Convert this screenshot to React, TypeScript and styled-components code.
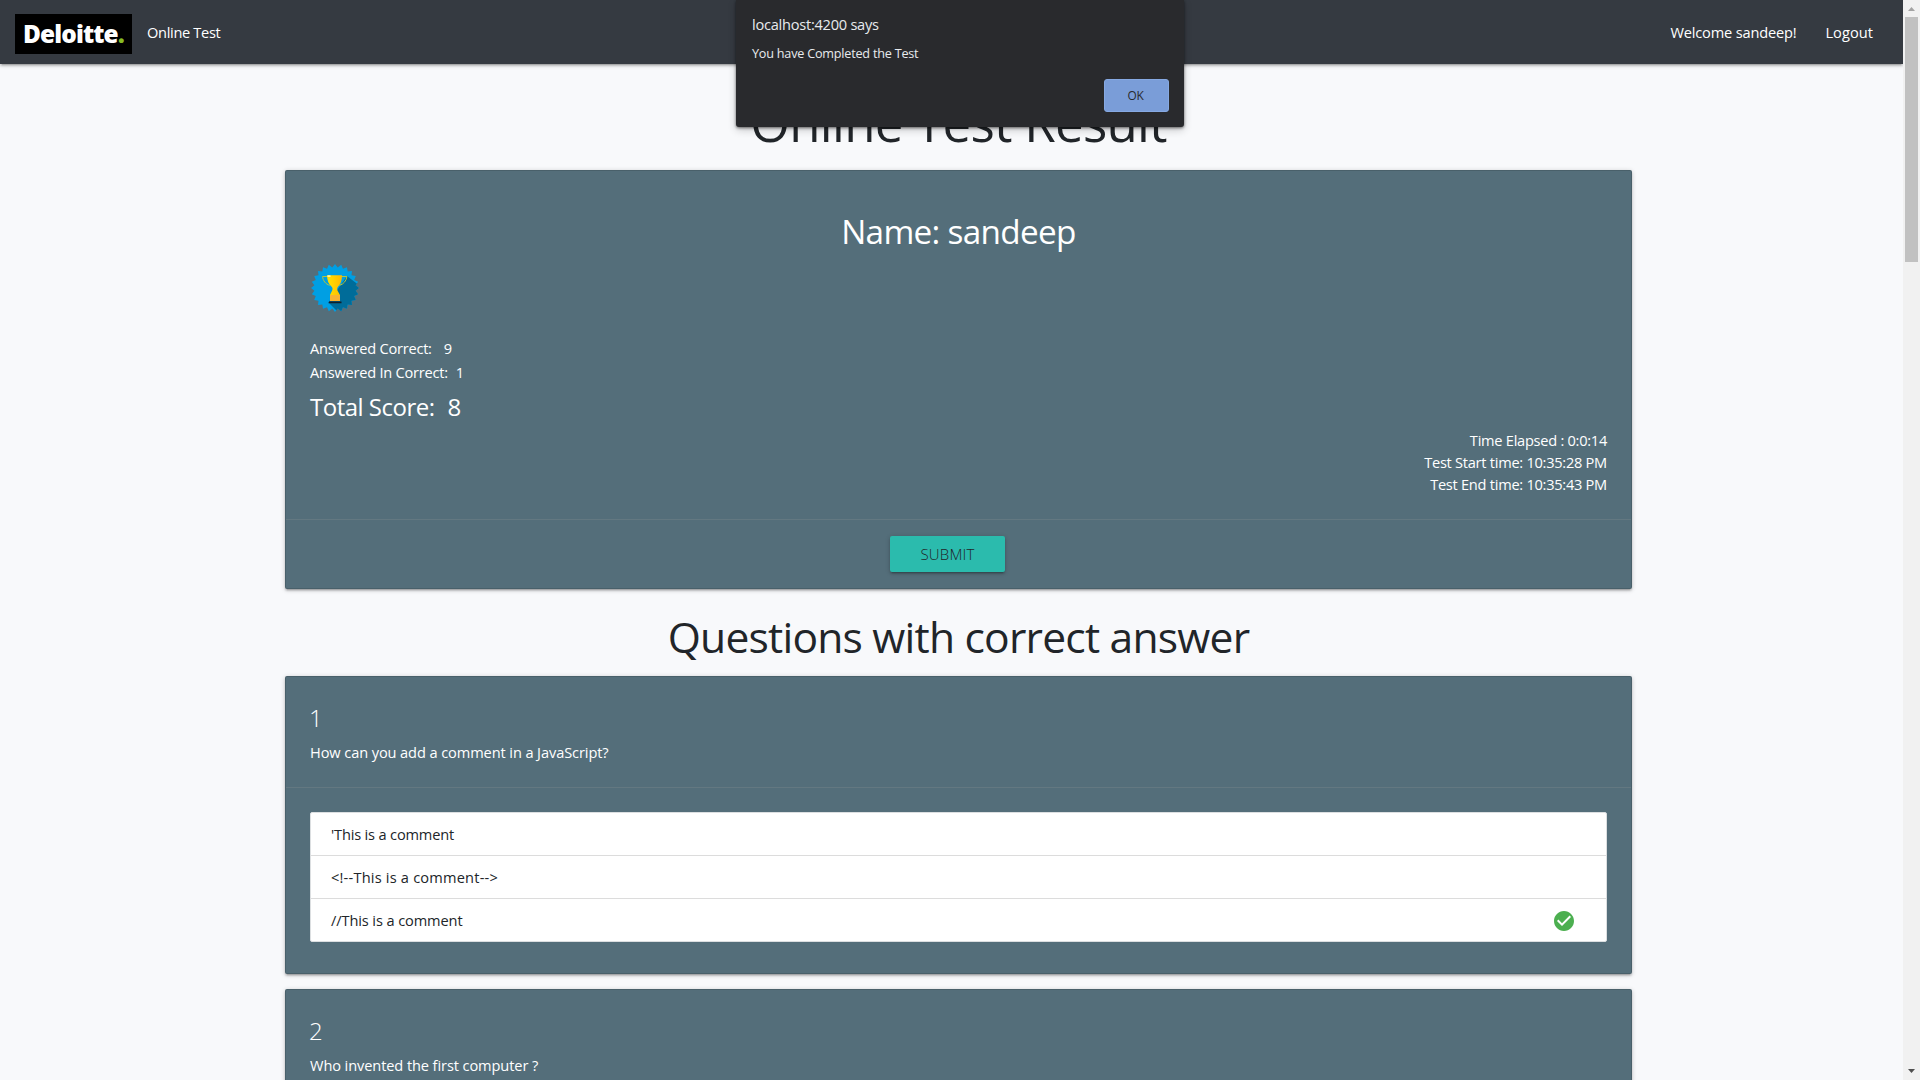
import React from "react";
import styled, { createGlobalStyle } from "styled-components";

const GlobalStyle = createGlobalStyle`
  * { box-sizing: border-box; }
  body {
    margin: 0;
    background: #f8f9fb;
    color: #212529;
    font-family: "Open Sans", "Noto Sans", sans-serif;
    font-size: 14.6px;
    overflow: hidden;
  }
  h1, h2, h3, h4, p, ul { margin: 0; padding: 0; font-weight: 400; }
`;

const depth =
  "0 2px 2px 0 rgba(0,0,0,.14), 0 3px 1px -2px rgba(0,0,0,.12), 0 1px 5px 0 rgba(0,0,0,.2)";

const Window = styled.div`
  position: relative;
  display: flex;
  width: 1920px;
  height: 1080px;
  overflow: hidden;
`;

const Page = styled.div`
  flex: 1;
  height: 100%;
  overflow: hidden;
`;

const Navbar = styled.nav`
  display: flex;
  align-items: center;
  height: 64px;
  padding: 0 30px 0 15px;
  background: #353a41;
  color: #fff;
  box-shadow: ${depth};
`;

const Logo = styled.div`
  align-self: flex-end;
  width: 117px;
  height: 40px;
  margin: 0 15px 10px 0;
  padding-left: 8px;
  background: #000;
  font-size: 24.4px;
  line-height: 39px;
  font-weight: 800;
  letter-spacing: -0.88px;
  span { color: #86bc25; }
`;

const NavText = styled.span<{ $spacing: number; $push?: boolean }>`
  line-height: 64px;
  letter-spacing: ${(p) => p.$spacing}px;
  margin-left: ${(p) => (p.$push ? "auto" : "0")};
`;

const Logout = styled(NavText)`
  margin-left: 29px;
`;

const Content = styled.main`
  padding: 29px 271px 0 285px;
`;

const PageTitle = styled.h1`
  font-size: 51px;
  line-height: 58px;
  letter-spacing: -0.7px;
  text-align: center;
  margin-bottom: 19px;
`;

const SectionTitle = styled.h2`
  font-size: 42.6px;
  line-height: 48px;
  letter-spacing: -0.79px;
  text-align: center;
  margin: 23px 0 16px;
`;

const Card = styled.section`
  border: 1px solid rgba(0, 0, 0, 0.125);
  border-radius: 2px;
  background: #546e7a;
  color: #fff;
  box-shadow: ${depth};
  margin-bottom: 15px;
`;

const ResultBody = styled.div`
  display: flex;
  flex-direction: column;
  padding: 41px 24px 24px;
`;

const Name = styled.h3`
  font-size: 33.3px;
  line-height: 38px;
  letter-spacing: -0.68px;
  text-align: center;
`;

const Badge = styled.svg`
  width: 50px;
  height: 50px;
  margin: 13px 0 23px;
`;

const Stat = styled.p`
  display: flex;
  line-height: 24px;
  letter-spacing: -0.23px;
`;

const StatValue = styled.span<{ $gap: number }>`
  margin-left: ${(p) => p.$gap}px;
`;

const Total = styled(Stat)`
  margin: 8px 0 7px;
  font-size: 24px;
  line-height: 30px;
  letter-spacing: -0.5px;
`;

const Times = styled.div`
  text-align: right;
  line-height: 22px;
  letter-spacing: -0.26px;
`;

const CardAction = styled.div`
  display: flex;
  justify-content: center;
  padding: 16px 22px 16px 0;
  border-top: 1px solid rgba(160, 160, 160, 0.2);
`;

const SubmitButton = styled.button`
  width: 115px;
  height: 36px;
  padding: 1px 0 0;
  border: 0;
  border-radius: 2px;
  background: #2bbbad;
  color: #212529;
  font-family: inherit;
  font-size: 15px;
  font-weight: 350;
  line-height: 35px;
  letter-spacing: 0.2px;
  box-shadow: ${depth};
`;

const QuestionHead = styled.div`
  padding: 26px 24px 24px;
`;

const QuestionNumber = styled.h4`
  margin: 0 0 8px -1px;
  font-size: 24px;
  line-height: 30px;
  font-weight: 300;
`;

const QuestionText = styled.p`
  line-height: 22px;
  letter-spacing: -0.1px;
`;

const Answers = styled.div`
  padding: 24px 24px 31px;
  border-top: 1px solid rgba(160, 160, 160, 0.2);
`;

const AnswerList = styled.ul`
  list-style: none;
  border: 1px solid #dcdfe1;
  border-radius: 2px;
  background: #fff;
  color: #212529;
`;

const Answer = styled.li<{ $spacing: number }>`
  display: flex;
  align-items: center;
  justify-content: space-between;
  height: 42px;
  padding: 0 31px 0 20px;
  letter-spacing: ${(p) => p.$spacing}px;
  & + & { height: 43px; border-top: 1px solid #dcdcdc; }
`;

const CheckIcon = styled.svg`
  width: 24px;
  height: 24px;
  margin: 1px -0.5px 0 0;
`;

const Scrollbar = styled.aside`
  display: flex;
  flex-direction: column;
  align-items: center;
  justify-content: space-between;
  width: 17px;
  height: 100%;
  background: #f1f1f1;
`;

const Arrow = styled.svg`
  display: block;
  width: 17px;
  height: 17px;
`;

const Track = styled.div`
  flex: 1;
  width: 13px;
`;

const Thumb = styled.div`
  height: 245px;
  background: #c1c1c1;
`;

const Dialog = styled.div`
  position: absolute;
  top: 0;
  left: 736px;
  display: flex;
  flex-direction: column;
  width: 448px;
  height: 127px;
  padding: 13px 16px 15px;
  border-radius: 0 0 3px 3px;
  background: #292a2d;
  color: #e8eaed;
  box-shadow: 0 1px 3px rgba(0, 0, 0, 0.55), 0 3px 8px rgba(0, 0, 0, 0.2);
`;

const DialogTitle = styled.p`
  line-height: 22px;
  letter-spacing: -0.25px;
`;

const DialogMessage = styled.p`
  margin-top: 8px;
  font-size: 12.65px;
  line-height: 20px;
  letter-spacing: -0.22px;
`;

const OkButton = styled.button`
  align-self: flex-end;
  width: 65px;
  height: 33px;
  margin: auto -1px 0 0;
  padding: 0 2px 1px 0;
  border: 1px solid #86a9e2;
  border-radius: 3px;
  background: #7a9dd8;
  color: #292a2d;
  font-family: inherit;
  font-size: 11.9px;
  line-height: 28px;
  letter-spacing: -0.3px;
`;

const teeth = 24;
const burst = Array.from({ length: teeth * 2 }, (_, i) => {
  const radius = i % 2 ? 20.8 : 24;
  const angle = (Math.PI * i) / teeth;
  return `${(25 + radius * Math.sin(angle)).toFixed(2)},${(25 - radius * Math.cos(angle)).toFixed(2)}`;
}).join(" ");

const Trophy = () => (
  <Badge viewBox="0 0 50 50">
    <defs>
      <clipPath id="burst"><polygon points={burst} /></clipPath>
      <linearGradient id="gold">
        <stop offset="0" stopColor="#ffe100" />
        <stop offset="0.45" stopColor="#ffd000" />
        <stop offset="1" stopColor="#fdb900" />
      </linearGradient>
    </defs>
    <polygon points={burst} fill="#009fe3" />
    <path d="M37 13 50 23V50H29L18.500 39.500Z" fill="#006c99" clipPath="url(#burst)" />
    <path d="M17.500 13.500H12.600c.3 4 3 7.800 7.200 8.800M31.500 13.500H36.900c-.5 4-3.200 7.800-7.400 8.800" fill="none" stroke="#b5c43c" strokeWidth="1" />
    <path d="M17 12.300H32c0 5.500-1.500 9-4.200 11.700-1 1-.8 3 .2 4.600l2 3.400H20l1.700-3.400c1-1.800 1.200-3.600.2-4.600C18.700 21.300 17.200 17.800 17 12.300Z" fill="url(#gold)" />
    <path d="M17.500 12.300h3v1.500h-3z" fill="#fff6c4" />
    <path d="M20 32H30V38H20Z" fill="#f9b233" />
    <path d="M19 38.500H31.500V40.200H18.500Z" fill="#10202c" />
  </Badge>
);

const Check = () => (
  <CheckIcon viewBox="0 0 24 24" fill="#4caf50">
    <path d="M12 2C6.480 2 2 6.480 2 12s4.480 10 10 10 10-4.480 10-10S17.520 2 12 2zm-2 15l-5-5 1.410-1.410L10 14.170l7.590-7.590L19 8l-9 9z" />
  </CheckIcon>
);

type Option = { text: string; spacing: number; correct?: boolean };

const questions: { text: string; options: Option[] }[] = [
  {
    text: "How can you add a comment in a JavaScript?",
    options: [
      { text: "'This is a comment", spacing: -0.17 },
      { text: "<!--This is a comment-->", spacing: 0.2 },
      { text: "//This is a comment", spacing: -0.11, correct: true },
    ],
  },
  { text: "Who invented the first computer ?", options: [] },
];

export default function App() {
  return (
    <Window>
      <GlobalStyle />
      <Page>
        <Navbar>
          <Logo>Deloitte<span>.</span></Logo>
          <NavText $spacing={-0.32}>Online Test</NavText>
          <NavText $spacing={-0.17} $push>Welcome sandeep!</NavText>
          <Logout $spacing={0.05}>Logout</Logout>
        </Navbar>
        <Content>
          <PageTitle>Online Test Result</PageTitle>
          <Card>
            <ResultBody>
              <Name>Name: sandeep</Name>
              <Trophy />
              <Stat>Answered Correct:<StatValue $gap={12}>9</StatValue></Stat>
              <Stat>Answered In Correct:<StatValue $gap={8}>1</StatValue></Stat>
              <Total>Total Score:<StatValue $gap={13}>8</StatValue></Total>
              <Times>
                <p>Time Elapsed : 0:0:14</p>
                <p>Test Start time: 10:35:28 PM</p>
                <p>Test End time: 10:35:43 PM</p>
              </Times>
            </ResultBody>
            <CardAction><SubmitButton>SUBMIT</SubmitButton></CardAction>
          </Card>
          <SectionTitle>Questions with correct answer</SectionTitle>
          {questions.map((question, index) => (
            <Card key={question.text}>
              <QuestionHead>
                <QuestionNumber>{index + 1}</QuestionNumber>
                <QuestionText>{question.text}</QuestionText>
              </QuestionHead>
              <Answers>
                <AnswerList>
                  {question.options.map((option) => (
                    <Answer key={option.text} $spacing={option.spacing}>
                      {option.text}
                      {option.correct && <Check />}
                    </Answer>
                  ))}
                </AnswerList>
              </Answers>
            </Card>
          ))}
        </Content>
      </Page>
      <Scrollbar>
        <Arrow viewBox="0 0 17 17"><path d="M5 11 8.500 7 12 11Z" fill="#a3a3a3" /></Arrow>
        <Track><Thumb /></Track>
        <Arrow viewBox="0 0 17 17"><path d="M5 6 8.500 10 12 6Z" fill="#505050" /></Arrow>
      </Scrollbar>
      <Dialog>
        <DialogTitle>localhost:4200 says</DialogTitle>
        <DialogMessage>You have Completed the Test</DialogMessage>
        <OkButton>OK</OkButton>
      </Dialog>
    </Window>
  );
}
